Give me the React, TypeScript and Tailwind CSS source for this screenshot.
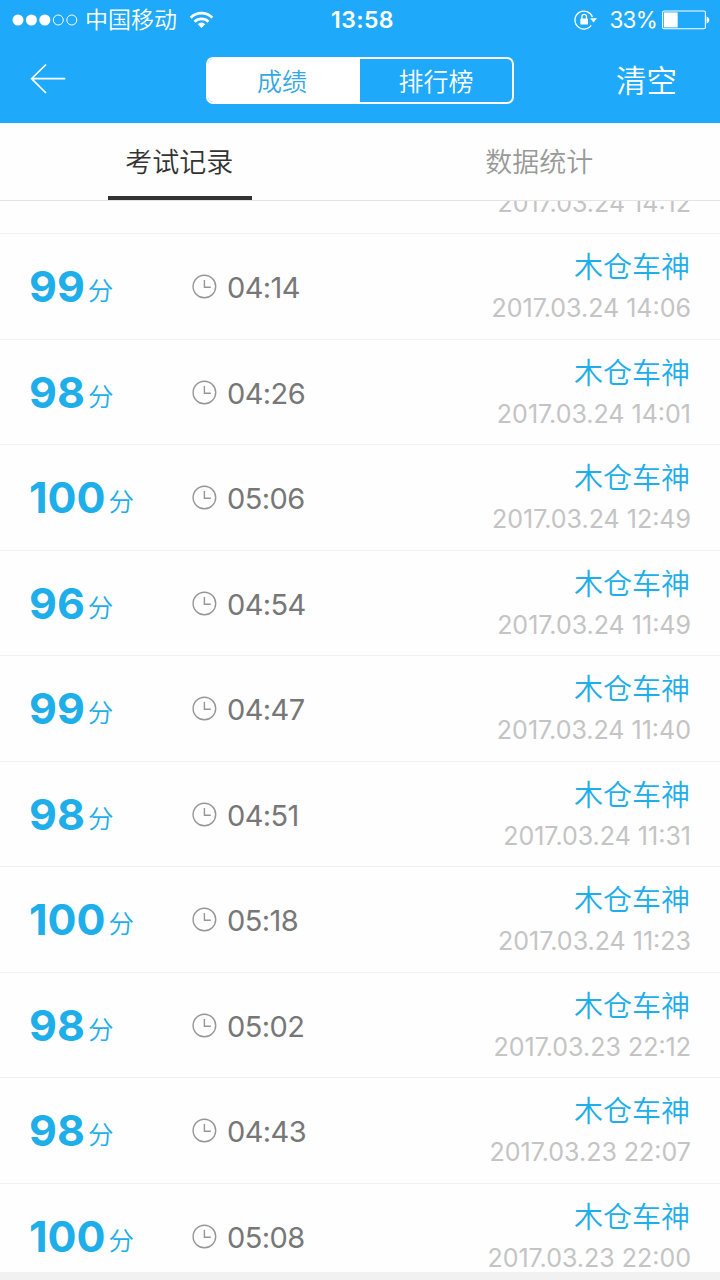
type ExamRecord = { score: number; time: string; rank: string; date: string };

const rank = "木仓车神";

const records: ExamRecord[] = [
  { score: 99, time: "04:14", rank, date: "2017.03.24 14:06" },
  { score: 98, time: "04:26", rank, date: "2017.03.24 14:01" },
  { score: 100, time: "05:06", rank, date: "2017.03.24 12:49" },
  { score: 96, time: "04:54", rank, date: "2017.03.24 11:49" },
  { score: 99, time: "04:47", rank, date: "2017.03.24 11:40" },
  { score: 98, time: "04:51", rank, date: "2017.03.24 11:31" },
  { score: 100, time: "05:18", rank, date: "2017.03.24 11:23" },
  { score: 98, time: "05:02", rank, date: "2017.03.23 22:12" },
  { score: 98, time: "04:43", rank, date: "2017.03.23 22:07" },
  { score: 100, time: "05:08", rank, date: "2017.03.23 22:00" },
];

function SignalDots() {
  return (
    <svg width="66" height="12" viewBox="0 0 66 12" className="shrink-0">
      {[6, 19.4, 32.8].map((x) => (
        <circle key={x} cx={x} cy="6" r="5.5" fill="white" />
      ))}
      {[46.3, 59.8].map((x) => (
        <circle key={x} cx={x} cy="6" r="5" fill="none" stroke="white" strokeWidth="1" />
      ))}
    </svg>
  );
}

function WifiIcon() {
  return (
    <svg width="25" height="18" viewBox="0 0 26 18" className="shrink-0" fill="none" stroke="white" strokeWidth="2.8">
      <path d="M1.8 6.6a15.8 15.8 0 0 1 22.4 0" />
      <path d="M5.8 10.8a10.2 10.2 0 0 1 14.4 0" />
      <path d="M13 17.2l-3.9-3.9a5.5 5.5 0 0 1 7.8 0z" fill="white" stroke="none" />
    </svg>
  );
}

function RotationLockIcon() {
  return (
    <svg width="24" height="20" viewBox="0 0 24 20" className="shrink-0" fill="none" stroke="white" strokeWidth="1.3">
      <path d="M18.4 7A9 9 0 1 0 17.2 15.4" />
      <path d="M16 8.2h7l-3.5 4.2z" fill="white" stroke="none" />
      <rect x="6.4" y="8.6" width="7.6" height="6" rx="0.6" fill="white" stroke="none" />
      <path d="M7.9 9V6.7a2.3 2.3 0 0 1 4.6 0V9" />
    </svg>
  );
}

function BatteryIcon() {
  return (
    <svg width="48" height="20" viewBox="0 0 48 20" className="shrink-0">
      <rect x="0.6" y="1" width="42.8" height="17.8" rx="1.6" fill="none" stroke="white" strokeWidth="1.1" />
      <rect x="2" y="2.4" width="13.7" height="15" fill="white" />
      <path d="M44.6 6.4c3.6 1 3.6 6 0 7z" fill="white" />
    </svg>
  );
}

function StatusBar() {
  return (
    <div className="grid h-10 grid-cols-[300px_125px_1fr] grid-rows-[40px] items-center text-white">
      <div className="flex h-10 items-center pl-[12px]">
        <SignalDots />
        <span className="ml-[7px] text-[23px] leading-[42px] font-[350]">中国移动</span>
        <span className="mb-px ml-[12px]"><WifiIcon /></span>
      </div>
      <div className="text-center text-[23px] leading-10 font-semibold tracking-[0.4px]">13:58</div>
      <div className="flex h-10 items-center justify-end pr-[10px]">
        <RotationLockIcon />
        <span className="mr-[5px] ml-[12px] text-[22.5px] leading-10 tracking-[-0.8px]">33%</span>
        <BatteryIcon />
      </div>
    </div>
  );
}

function ClockIcon() {
  return (
    <svg width="25" height="25" viewBox="0 0 25 25" className="shrink-0" fill="none" stroke="#969696" strokeWidth="1.4">
      <circle cx="12.4" cy="12.5" r="11.3" />
      <path d="M12.4 6v7.2h6.4" />
    </svg>
  );
}

function NavBar() {
  return (
    <div className="flex h-[83px] items-start font-[350] text-white">
      <button className="mt-[23px] ml-[30px] w-[176px]" aria-label="返回">
        <svg width="36" height="32" viewBox="0 0 36 32" fill="none" stroke="white" strokeWidth="1.7">
          <path d="M35.3 15.7H2M16 1.5L1.6 15.7L16 30" />
        </svg>
      </button>
      <div className="mt-[17px] flex h-[47px] w-[308px] overflow-hidden rounded-[7px] border-2 border-white text-center text-[25px] leading-[46px]">
        <div className="w-[152px] bg-white pr-[4px] text-[#35a8e4]">成绩</div>
        <div className="flex-1">排行榜</div>
      </div>
      <button className="mt-[18px] mr-[43px] ml-auto text-[30.5px] leading-[46px]">清空</button>
    </div>
  );
}

function Tabs() {
  return (
    <div className="flex h-[78px] shrink-0 border-b border-[#e4e4e4] bg-[#fefefe] text-[27px] leading-[79px] font-[350]">
      <div className="flex flex-1 justify-center text-[#333]">
        <div className="h-[77px] w-[144px] border-b-4 border-[#333] pr-px text-center">考试记录</div>
      </div>
      <div className="flex-1 pr-px text-center text-[#999]">数据统计</div>
    </div>
  );
}

function RecordRow({ score, time, rank, date }: ExamRecord) {
  return (
    <li className="flex h-[105.56px] shrink-0 border-b border-[#f1f1f1] pr-[29px] pl-[29px]">
      <div className="flex w-[163px] items-start text-[#1eaeea]">
        <span className="text-[43px] leading-[105px] font-bold">{score}</span>
        <span className="ml-[3px] text-[25.5px] leading-[114px] font-[350]">分</span>
      </div>
      <div className="flex items-start text-[#777]">
        <span className="mt-[40px]"><ClockIcon /></span>
        <span className="ml-[10px] text-[29px] leading-[108px] tracking-[-0.6px]">{time}</span>
      </div>
      <div className="ml-auto flex flex-col items-end pt-[14px]">
        <span className="mr-px text-[29px] leading-[40px] font-[350] text-[#1eaeea]">{rank}</span>
        <span className="text-[25px] leading-[40px] text-[#c4c4c4]">{date}</span>
      </div>
    </li>
  );
}

export default function App() {
  return (
    <div className="flex h-[1280px] w-[720px] flex-col overflow-hidden bg-[#f1f1f1] font-['Inter','Noto_Sans_CJK_SC',sans-serif]">
      <header className="shrink-0 bg-[#1fa9fb]">
        <StatusBar />
        <NavBar />
      </header>
      <Tabs />
      <main className="h-[1071px] overflow-hidden bg-[#fefefe]">
        <ul className="flex flex-col">
          <li className="flex h-[33px] shrink-0 items-end justify-end overflow-hidden border-b border-[#f1f1f1] pr-[29px] pb-[9px]">
            <span className="text-[25px] leading-[42px] text-[#c4c4c4]">2017.03.24 14:12</span>
          </li>
          {records.map((record) => (
            <RecordRow key={record.date} {...record} />
          ))}
        </ul>
      </main>
    </div>
  );
}
